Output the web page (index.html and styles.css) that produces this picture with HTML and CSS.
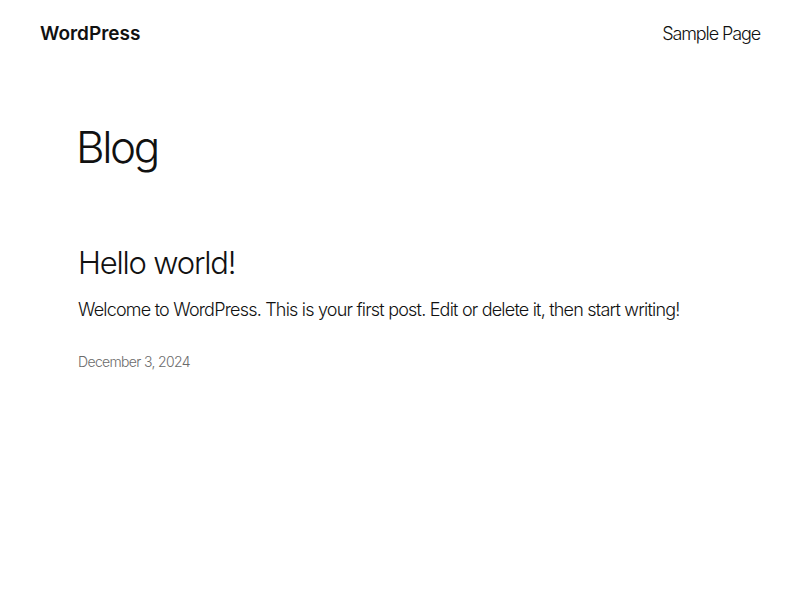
FILE: index.html
```html
<!DOCTYPE html>
<html lang="en">
<head>
  <meta charset="UTF-8">
  <title>Blog</title>
  <link rel="stylesheet" href="styles.css">
</head>
<body>
  <header class="site-header">
    <a class="site-title" href="#">WordPress</a>
    <nav class="site-nav">
      <a href="#">Sample Page</a>
    </nav>
  </header>

  <main class="content">
    <h1 class="page-title">Blog</h1>

    <article class="post">
      <h2 class="post-title">Hello world!</h2>
      <p class="post-excerpt">Welcome to WordPress. This is your first post. Edit or delete it, then start writing!</p>
      <div class="post-date">December 3, 2024</div>
    </article>
  </main>
</body>
</html>
```

FILE: styles.css
```css
body {
  margin: 0;
  font-family: Inter, "Noto Sans", sans-serif;
  font-weight: 300;
  color: #111111;
  background: #ffffff;
}
a {
  color: inherit;
  text-decoration: none;
}
.site-header {
  display: flex;
  justify-content: space-between;
  align-items: center;
  height: 66px;
  padding: 0 40px;
}
.site-title {
  font-size: 19px;
  font-weight: 600;
  letter-spacing: 0;
}
.site-nav {
  font-size: 18px;
  letter-spacing: -1.1px;
}
.content {
  padding: 55px 78px;
}
.page-title {
  margin: 0 0 0 -2px;
  font-size: 44px;
  font-weight: 300;
  letter-spacing: -2.4px;
  line-height: 1.2;
}
.post {
  margin-top: 70px;
}
.post-title {
  margin: 0;
  font-size: 31px;
  font-weight: 300;
  letter-spacing: -1.2px;
  line-height: 1.2;
}
.post-excerpt {
  margin: 15px 0 0;
  font-size: 18px;
  letter-spacing: -0.8px;
  line-height: 1.5;
}
.post-date {
  margin-top: 30px;
  font-size: 14px;
  color: #6b6b6b;
  letter-spacing: -0.65px;
}
```
